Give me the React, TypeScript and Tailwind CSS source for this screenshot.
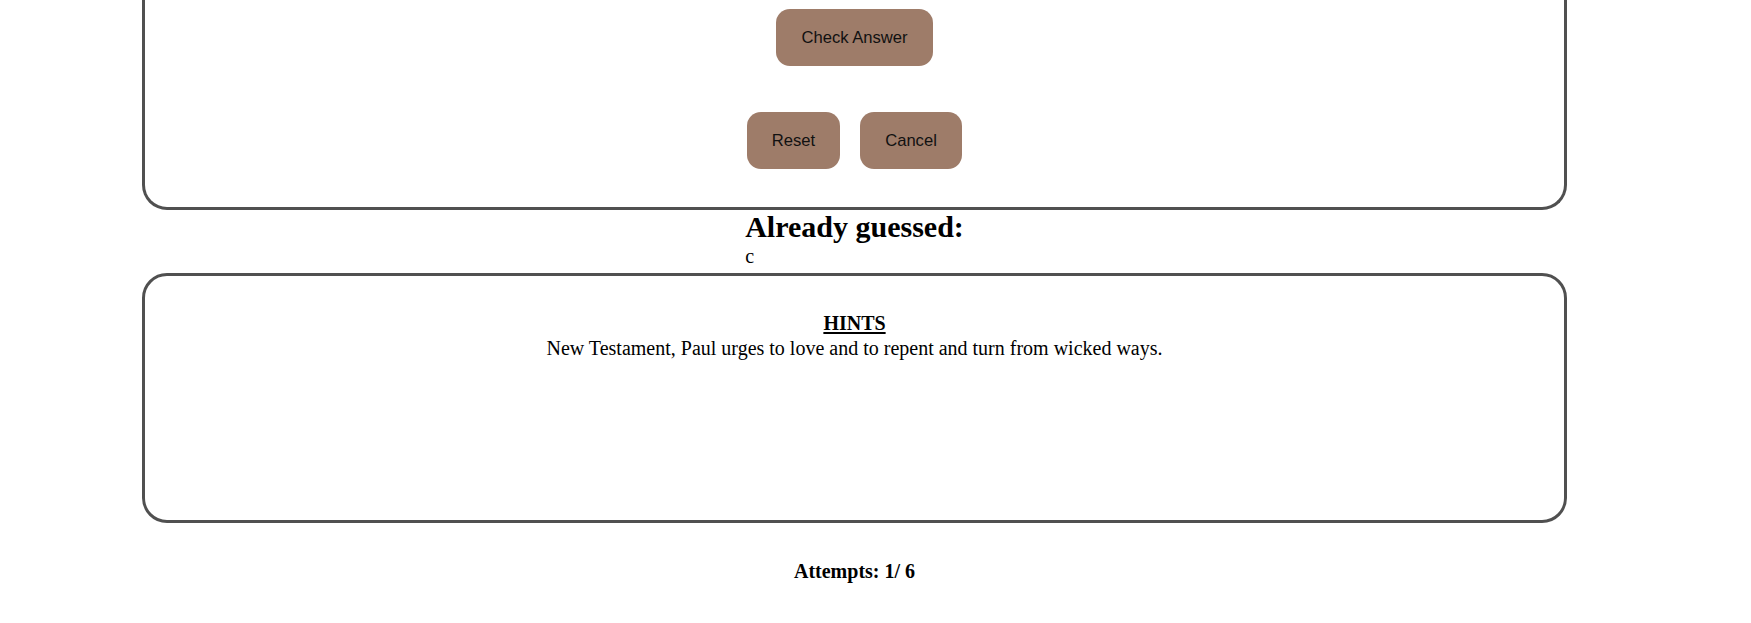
import React from 'react';

const serif = "font-['Liberation_Serif','Times_New_Roman',serif]";

function GameButton({ label, width }: { label: string; width: string }) {
    return (
        <button
            type="button"
            className={`${width} h-[57px] rounded-[14px] bg-[#9e7c69] text-[16.6px] leading-[18px] text-[#111] font-['Liberation_Sans',Arial,sans-serif] text-center`}
        >
            {label}
        </button>
    );
}

export default function App() {
    const guessed = ['c'];

    return (
        <div className={`min-h-[623px] w-full bg-white text-black ${serif}`}>
            {/* Answer panel (scrolled, top edge out of view) */}
            <div className="ml-[142px] w-[1425px] border-x-[3px] border-b-[3px] border-[#505050] rounded-b-[25px] pt-[9px] pb-[38px] flex flex-col items-center">
                <GameButton label="Check Answer" width="w-[157px]" />
                <div className="mt-[46px] flex gap-[20px]">
                    <GameButton label="Reset" width="w-[93px]" />
                    <GameButton label="Cancel" width="w-[102px]" />
                </div>
            </div>

            {/* Already guessed */}
            <div className="ml-[142px] w-[1425px] flex justify-center">
                <div className="text-left">
                    <h2 className="text-[30px] leading-[33px] font-bold">Already guessed:</h2>
                    <div className="pt-[3px] text-[20px] leading-[20px]">{guessed.join(', ')}</div>
                </div>
            </div>

            {/* Hints */}
            <div className="mt-[7px] ml-[142px] w-[1425px] h-[250px] border-[3px] border-[#505050] rounded-[25px] pt-[35px] text-center text-[20px] leading-[25px]">
                <div className="font-bold underline underline-offset-[2px]">HINTS</div>
                <div>New Testament, Paul urges to love and to repent and turn from wicked ways.</div>
            </div>

            <div className="ml-[142px] w-[1425px] mt-[37px] text-center text-[20px] leading-[23px] font-bold">
                Attempts: 1/ 6
            </div>
        </div>
    );
}
